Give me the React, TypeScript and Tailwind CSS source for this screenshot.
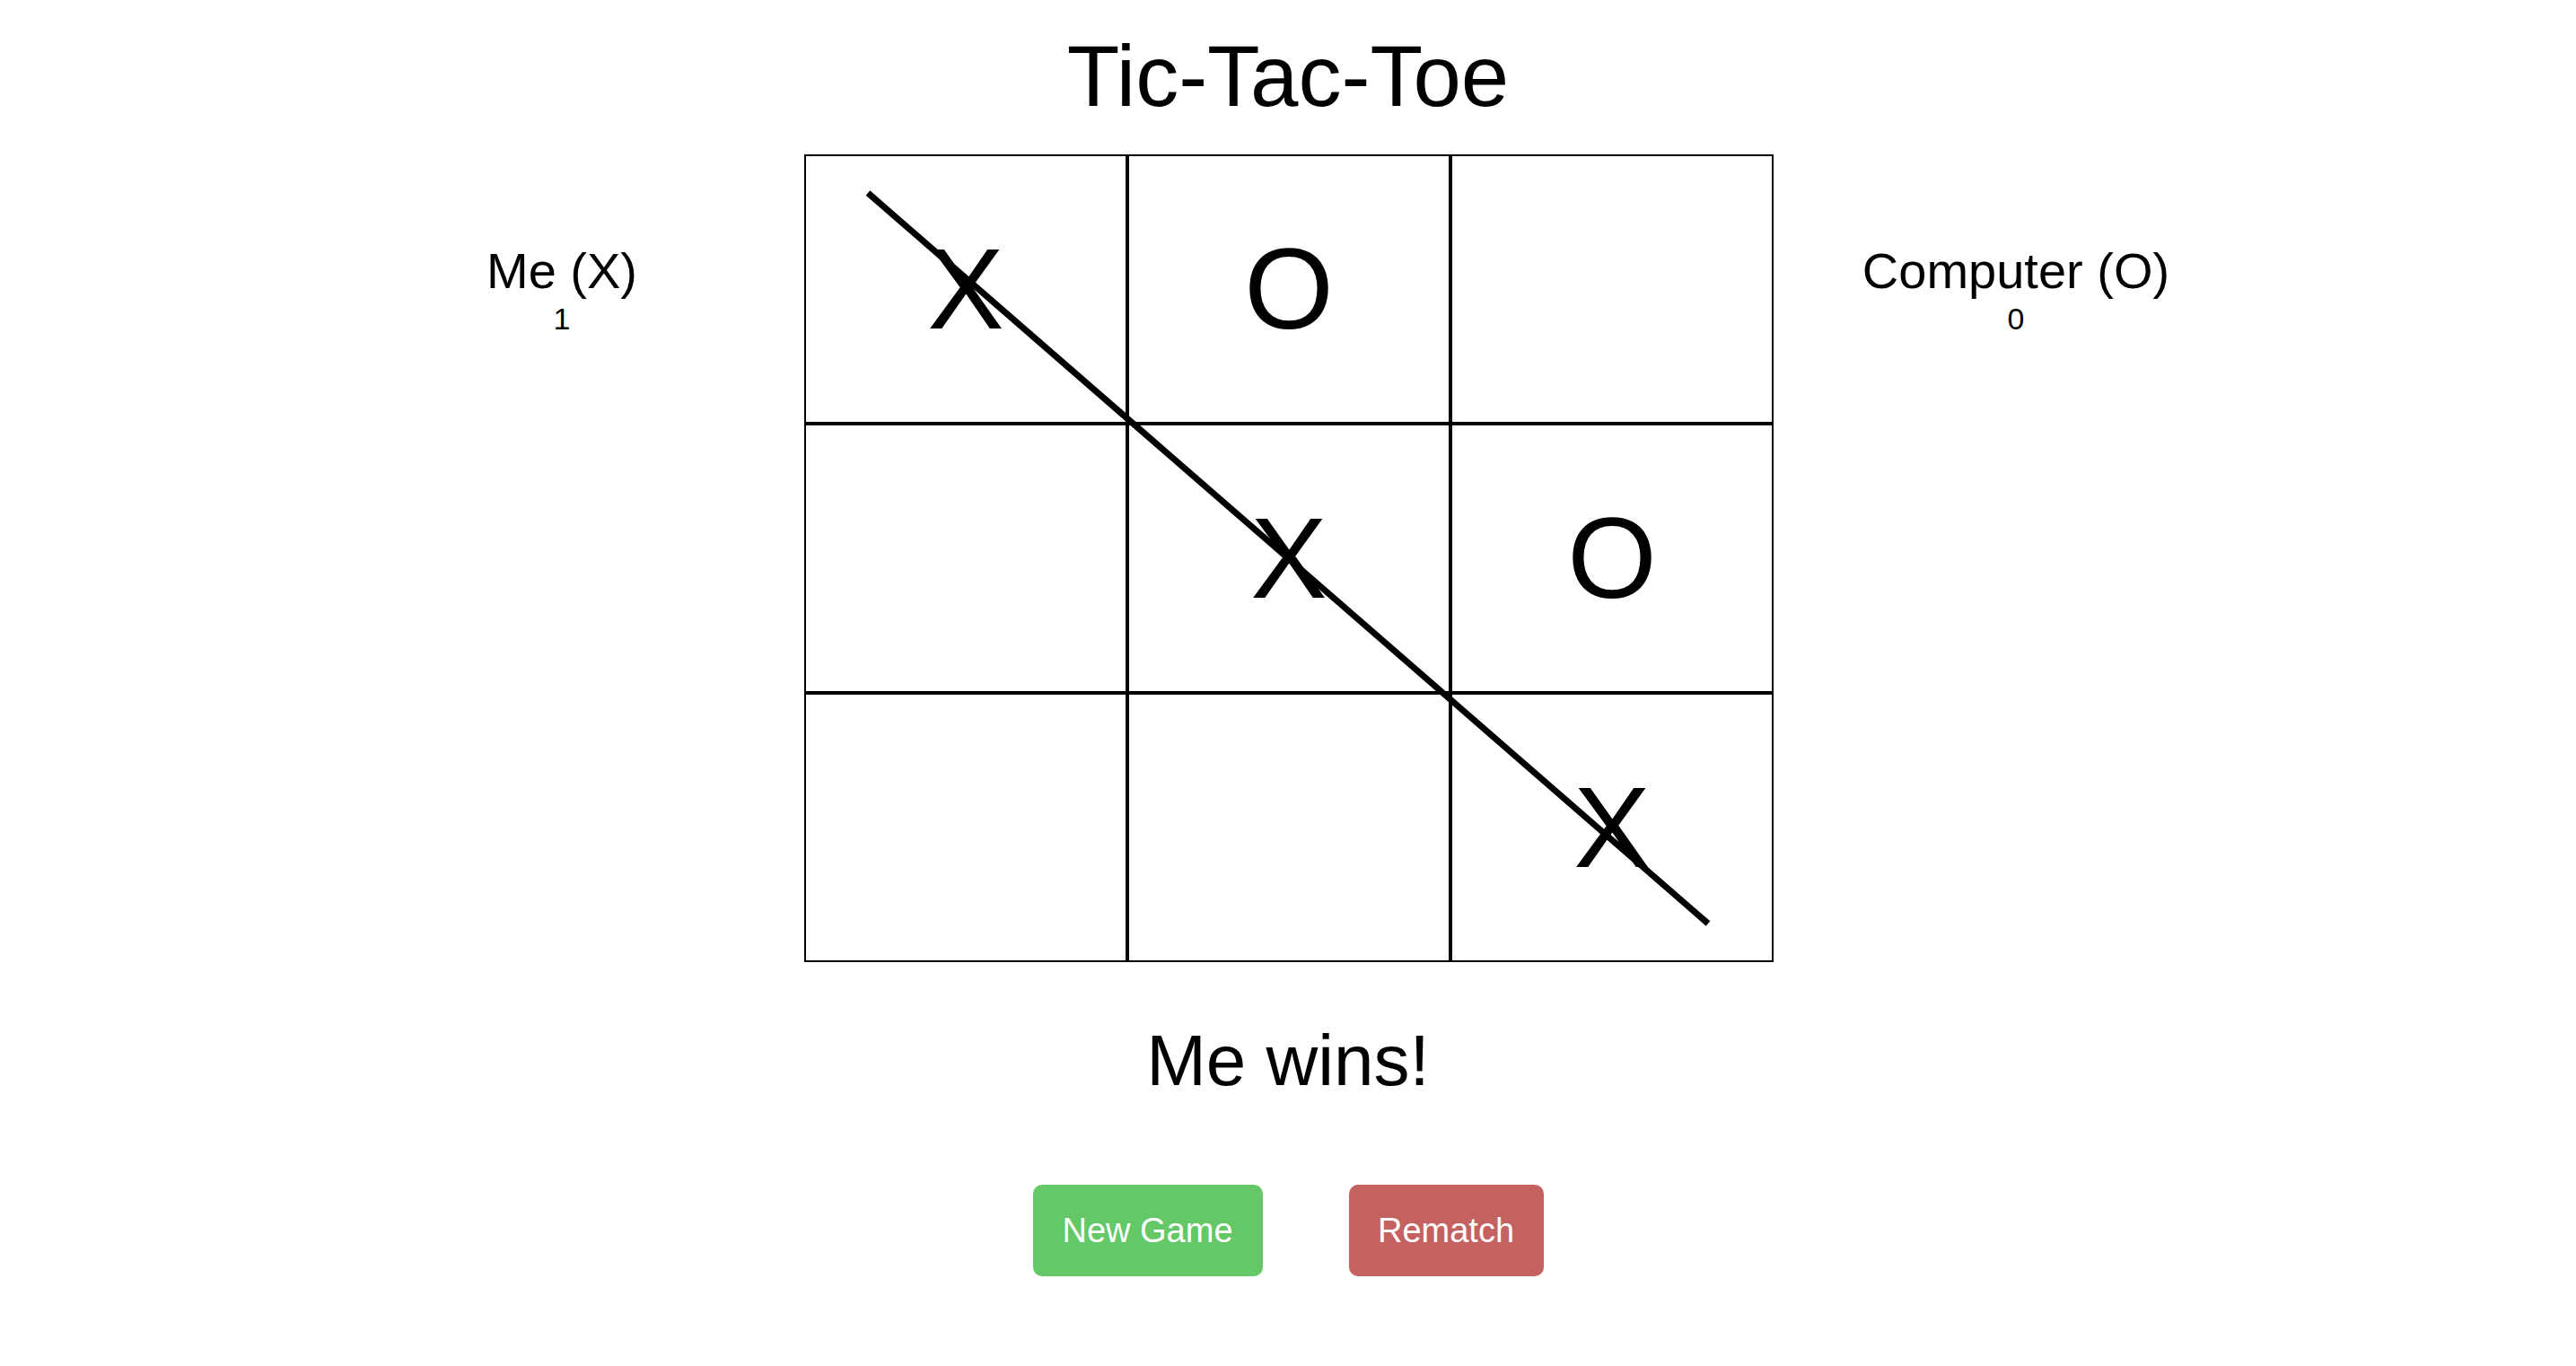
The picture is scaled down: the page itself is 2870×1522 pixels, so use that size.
import { useState } from "react"

type Mark = "X" | "O" | null

interface PlayerPanelProps {
  label: string
  score: number
}

const initialBoard: Mark[] = ["X", "O", null, null, "X", "O", null, null, "X"]

function PlayerPanel({ label, score }: PlayerPanelProps) {
  return (
    <div className="w-[400px] text-center">
      <div className="mt-[98px] text-[56px] leading-[64px]">{label}</div>
      <div className="mt-[1px] text-[34px] leading-[40px]">{score}</div>
    </div>
  )
}

export default function App() {
  const [board, setBoard] = useState<Mark[]>(initialBoard)
  const [scores] = useState({ me: 1, computer: 0 })
  const [winner, setWinner] = useState<string | null>("Me")

  const resetBoard = () => {
    setBoard(Array(9).fill(null))
    setWinner(null)
  }

  return (
    <div className="min-h-screen bg-white pt-[30px] font-['Liberation_Sans',Arial,sans-serif] text-black">
      <h1 className="text-center text-[96px] leading-[110px]">Tic-Tac-Toe</h1>

      <div className="mt-[32px] flex items-start justify-center pl-[2px]">
        <div className="mr-[70px]">
          <PlayerPanel label="Me (X)" score={scores.me} />
        </div>

        <div className="relative w-[1080px] h-[900px]">
          <div className="grid grid-cols-[repeat(3,360px)] grid-rows-[repeat(3,300px)]">
            {board.map((cell, i) => (
              <div
                key={i}
                className="flex items-center justify-center border-2 border-black text-[128px]"
              >
                {cell}
              </div>
            ))}
          </div>

          {winner && (
            <svg
              className="pointer-events-none absolute inset-0"
              width="1080"
              height="900"
              viewBox="0 0 1080 900"
            >
              <line x1="71" y1="43" x2="1007" y2="857" stroke="#000" strokeWidth="7" />
            </svg>
          )}
        </div>

        <div className="ml-[70px]">
          <PlayerPanel label="Computer (O)" score={scores.computer} />
        </div>
      </div>

      <div className="mt-[64px] h-[92px] text-center text-[80px] leading-[92px]">
        {winner ? `${winner} wins!` : ""}
      </div>

      <div className="mt-[92px] flex justify-center gap-[96px]">
        <button
          className="flex h-[102px] w-[256px] items-center justify-center rounded-[10px] bg-[#64c867] text-[38px] text-white"
          onClick={resetBoard}
        >
          New Game
        </button>
        <button
          className="flex h-[102px] w-[217px] items-center justify-center rounded-[10px] bg-[#c46262] text-[38px] text-white"
          onClick={resetBoard}
        >
          Rematch
        </button>
      </div>
    </div>
  )
}
